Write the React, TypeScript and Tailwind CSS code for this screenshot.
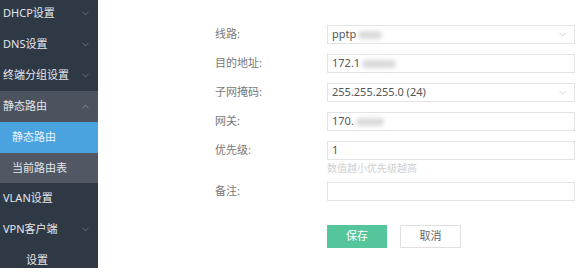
import React from 'react';
import { ChevronDown, ChevronUp } from 'lucide-react';

const font = { fontFamily: '"Noto Sans", "Noto Sans CJK SC", sans-serif' };

type NavItem = { label: string; kind: 'top' | 'open' | 'active' | 'sub'; chevron?: 'down' | 'up' };

const navItems: NavItem[] = [
  { label: 'DHCP设置', kind: 'top', chevron: 'down' },
  { label: 'DNS设置', kind: 'top', chevron: 'down' },
  { label: '终端分组设置', kind: 'top', chevron: 'down' },
  { label: '静态路由', kind: 'open', chevron: 'up' },
  { label: '静态路由', kind: 'active' },
  { label: '当前路由表', kind: 'sub' },
  { label: 'VLAN设置', kind: 'top' },
  { label: 'VPN客户端', kind: 'top', chevron: 'down' },
  { label: 'VPN设置', kind: 'sub' },
];

function Sidebar() {
  return (
    <div className="w-[98px] h-[268px] shrink-0 overflow-hidden bg-[#2f3946]">
      <div className="-mt-[2px] flex flex-col">
        {navItems.map((item, i) => {
          const bg =
            item.kind === 'open' ? 'bg-[#4b535f]' : item.kind === 'active' ? 'bg-[#4aa3df]' : item.kind === 'sub' && i === 5 ? 'bg-[#515864]' : '';
          const pad = item.kind === 'active' || item.kind === 'sub' ? 'pl-[12px]' : 'pl-[3px]';
          const h = i === 5 ? 'h-[30px]' : 'h-[31px]';
          return (
            <div key={i} className={`relative flex items-center ${h} ${pad} ${bg}`}>
              <span className={`text-[11px] ${item.kind === 'active' ? 'text-[#eaf4fb]' : 'text-[#e2e6eb]'}`}>
                {i === 8 ? <span className="pl-[14px]">{item.label.slice(3)}</span> : item.label}
              </span>
              {item.chevron === 'down' && (
                <ChevronDown size={11} strokeWidth={1.5} className="absolute right-[7px] text-[#7d8692]" />
              )}
              {item.chevron === 'up' && (
                <ChevronUp size={11} strokeWidth={1.5} className="absolute right-[7px] text-[#9aa2ad]" />
              )}
            </div>
          );
        })}
      </div>
    </div>
  );
}

function Blur({ w }: { w: number }) {
  return <span className="inline-block h-[8px] bg-[#dadada] blur-[2px] rounded-sm ml-[2px]" style={{ width: w }} />;
}

function Field({ children, select }: { children?: React.ReactNode; select?: boolean }) {
  return (
    <div className="relative flex-1 h-[19px] border border-[#e3e3e3] flex items-center pl-[4px] text-[11px] text-[#555]">
      {children}
      {select && <ChevronDown size={11} strokeWidth={1.3} className="absolute right-[6px] text-[#b5b5b5]" />}
    </div>
  );
}

function Row({ label, children }: { label: string; children: React.ReactNode }) {
  return (
    <div className="flex items-center">
      <div className="w-[112px] text-[11px] text-[#777]">{label}:</div>
      {children}
    </div>
  );
}

export default function App() {
  return (
    <div className="w-[580px] h-[274px] bg-white flex overflow-hidden" style={font}>
      <Sidebar />
      <div className="flex-1 pl-[117px] pr-[5px] pt-[25px] flex flex-col">
        <div className="flex flex-col gap-[10px]">
          <Row label="线路">
            <Field select>
              pptp<Blur w={24} />
            </Field>
          </Row>
          <Row label="目的地址">
            <Field>
              172.1<Blur w={34} />
            </Field>
          </Row>
          <Row label="子网掩码">
            <Field select>255.255.255.0 (24)</Field>
          </Row>
          <Row label="网关">
            <Field>
              170.<Blur w={28} />
            </Field>
          </Row>
          <Row label="优先级">
            <Field>1</Field>
          </Row>
        </div>
        <div className="h-[22px] pl-[112px] pt-[1px] text-[10px] text-[#cfcfcf]">数值越小优先级越高</div>
        <Row label="备注">
          <Field />
        </Row>
        <div className="pl-[112px] mt-[24px] flex gap-[13px]">
          <button className="w-[60px] h-[23px] bg-[#55c59c] text-white text-[11px]">保存</button>
          <button className="w-[61px] h-[23px] border border-[#e0e0e0] bg-white text-[#666] text-[11px]">取消</button>
        </div>
      </div>
    </div>
  );
}
